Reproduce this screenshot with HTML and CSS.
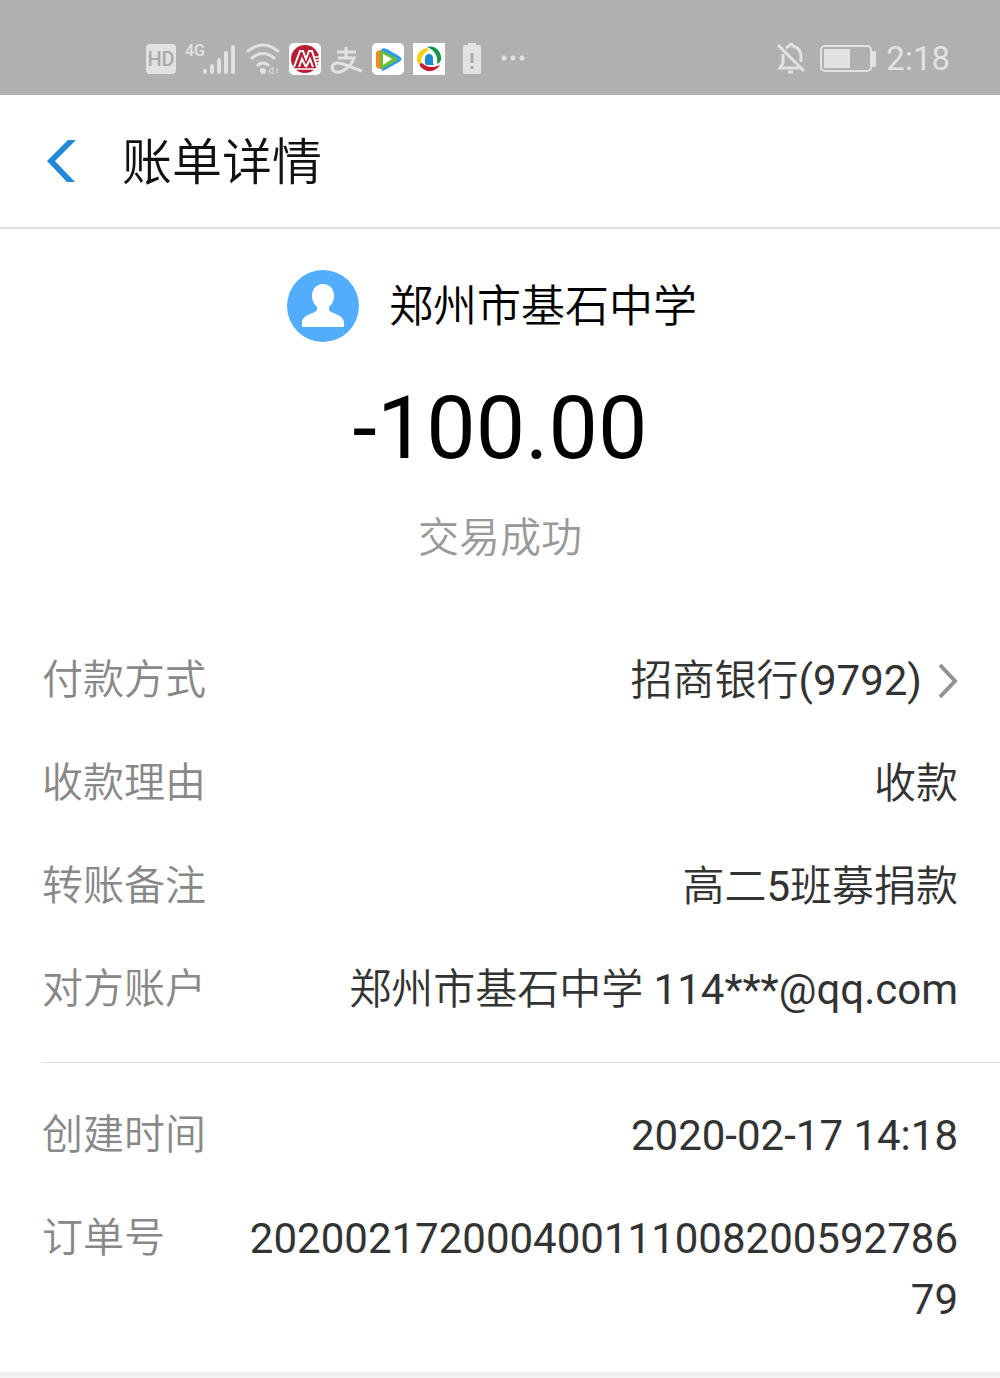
FILE: index.html
```html
<!DOCTYPE html>
<html lang="zh-CN">
<head>
<meta charset="utf-8" />
<meta name="viewport" content="width=device-width, initial-scale=1" />
<title>账单详情</title>
<link rel="stylesheet" href="styles.css">
</head>

<body>
<div class="status">
	<div class="icons">
		<svg width="30" height="36" viewBox="0 0 30 36">
			<rect x="0" y="3" width="30" height="30" rx="4" fill="#e2e2e2"/>
			<text x="15" y="25" class="hd">HD</text>
		</svg>
		<svg width="52" height="36" viewBox="0 0 52 36">
			<text x="0" y="15" class="net">4G</text>
			<path d="M20 30v1M27 25v6M34 19v12M41 12v19M48 6v25" stroke="#e2e2e2" stroke-width="4" stroke-linecap="round"/>
		</svg>
		<svg width="34" height="36" viewBox="0 0 34 36" fill="none" stroke="#e2e2e2" stroke-width="3" stroke-linecap="round">
			<path d="M2 10q15-12 30 0M6 17q11-9 22 0M12 24q5-4 10 0"/>
			<circle cx="17" cy="30" r="3" fill="#e2e2e2" stroke="none"/>
			<path d="M27 27v6l-4-3zM31 27v5" stroke-width="1"/>
		</svg>
		<!-- 招商银行 -->
		<svg width="32" height="36" viewBox="0 0 32 36">
			<rect y="2" width="32" height="32" rx="5" fill="#fff"/>
			<circle cx="16" cy="18" r="14" fill="#b91d35"/>
			<path d="M4 28h24M26 16h5M27 19h4M27 22h3" stroke="#fff" stroke-width="1.500"/>
			<path d="M5 26l6-16h3l3 8 3-8h3l5 16M10 26l3-8 4 8M17 26l4-8 3 8" fill="none" stroke="#fff" stroke-width="2"/>
		</svg>
		<!-- 支付宝 -->
		<svg width="33" height="36" viewBox="0 0 33 36" fill="none" stroke="#e2e2e2" stroke-width="3">
			<path d="M7 11h19M16 6v11M8 17h16C21 26 12 32 6 31c-6-1-5-9 2-9 6 0 14 5 24 8"/>
		</svg>
		<!-- 腾讯视频 -->
		<svg width="32" height="36" viewBox="0 0 32 36">
			<rect y="2" width="32" height="32" rx="5" fill="#fff"/>
			<path d="M4 12q0-3 6-3v19q-6 0-6-3z" fill="#f28a1f"/>
			<path d="M9 9q1-3 6-1l12 7q5 3 0 6l-14 8q-4 2-4-2z" fill="#2f9be6"/>
			<path d="M8 11q1-2 5 0l11 6q2 1 0 3l-12 7q-4 2-4-2z" fill="#6cbf35"/>
			<path d="M11 13l9 5-9 6z" fill="#fff"/>
		</svg>
		<svg width="32" height="36" viewBox="0 0 32 36">
			<rect y="2" width="32" height="32" fill="#fff"/>
			<path d="M14 6c8-2 15 4 14 13-1 2-2 3-4 4 1-7-1-13-10-17z" fill="#159447"/>
			<path d="M27 24c-5 8-15 8-20 1-1-2 0-3 2-3 5 5 11 5 18 2z" fill="#c9182b"/>
			<path d="M5 23C2 15 6 8 14 7l2 2c-5 2-8 7-8 13z" fill="#f3cf19"/>
			<path d="M12 22v-4q0-5 4-5t4 5v4l1 2h-8z" fill="#188bd0"/>
		</svg>
		<svg width="36" height="36" viewBox="0 0 36 36">
			<path d="M14 2h8v2h3q2 0 2 2v25q0 2-2 2H11q-2 0-2-2V6q0-2 2-2h3z" fill="#e2e2e2"/>
			<path d="M18 12v10M18 25v3" stroke="#aaa" stroke-width="3"/>
		</svg>
		<svg width="28" height="36" viewBox="0 0 28 36" fill="#e2e2e2">
			<circle cx="5" cy="17" r="2.500"/>
			<circle cx="14" cy="17" r="2.500"/>
			<circle cx="23" cy="17" r="2.500"/>
		</svg>
	</div>
	<div class="icons">
		<svg width="34" height="36" viewBox="0 0 34 36" fill="none" stroke="#e2e2e2" stroke-width="3">
			<path d="M2 4l26 26M10 7l3-2q2-4 4 0 8 2 8 11v5M7 13v9l-3 5h19M12 31h5"/>
		</svg>
		<svg width="58" height="36" viewBox="0 0 58 36">
			<rect x="2" y="5" width="50" height="25" rx="4" fill="none" stroke="#e2e2e2" stroke-width="2"/>
			<rect x="5" y="8" width="26" height="19" fill="#e2e2e2"/>
			<rect x="53" y="10" width="4" height="16" rx="1" fill="#e2e2e2"/>
		</svg>
		<span class="time">2:18</span>
	</div>
</div>

<div class="header">
	<a href="#" class="back" aria-label="返回">
		<svg width="32" height="46" viewBox="0 0 32 46"><path d="M22 2h8L9 23l20 21h-8L1 23z" fill="#2189d8"/></svg>
	</a>
	<h1>账单详情</h1>
</div>

<div class="bill">
	<div class="summary">
		<div class="payee">
			<svg width="72" height="72" viewBox="0 0 72 72">
				<circle cx="36" cy="36" r="36" fill="#52aefc"/>
				<path d="M36 14c7 0 11 5 11 12 0 5-2 8-5 11v3c2 4 15 4 15 13v4H15v-4c0-9 13-9 15-13v-3c-3-3-5-6-5-11 0-7 4-12 11-12z" fill="#fff"/>
			</svg>
			<span>郑州市基石中学</span>
		</div>
		<p class="amount">-100.00</p>
		<p class="state">交易成功</p>
	</div>
	<dl class="list">
		<div class="row">
			<dt>付款方式</dt>
			<dd><a href="#">招商银行(9792)<svg width="20" height="38" viewBox="0 0 20 38"><path d="M2 3l15 16L2 35" fill="none" stroke="#929292" stroke-width="4"/></svg></a></dd>
		</div>
		<div class="row">
			<dt>收款理由</dt>
			<dd>收款</dd>
		</div>
		<div class="row">
			<dt>转账备注</dt>
			<dd>高二5班募捐款</dd>
		</div>
		<div class="row">
			<dt>对方账户</dt>
			<dd>郑州市基石中学 114***@qq.com</dd>
		</div>
	</dl>
	<dl class="list order">
		<div class="row">
			<dt>创建时间</dt>
			<dd>2020-02-17 14:18</dd>
		</div>
		<div class="row">
			<dt>订单号</dt>
			<dd>20200217200040011100820059278679</dd>
		</div>
	</dl>
</div>
</body>
</html>
```
FILE: styles.css
```css
*{ margin:0; padding:0; box-sizing:border-box;}
body{ background:#f5f5f5; color:#333; font-family:Roboto,"Noto Sans CJK SC DemiLight","Noto Sans CJK SC",sans-serif;}
a{ color:inherit; text-decoration:none;}
svg{ display:block; flex:none;}

.status{ display:flex; justify-content:space-between; height:95px; padding:22px 50px 0 146px; background:#b0b0b0; align-items:center;}
.icons{ display:flex; align-items:center; gap:9px;}
.hd{ font-size:20px; font-weight:500; fill:#aaa; text-anchor:middle;}
.net{ font-size:16px; font-weight:500; fill:#e2e2e2;}
.time{ color:#e2e2e2; font-size:33px; line-height:36px;}

.header{ display:flex; align-items:center; height:134px; padding:0 46px; background:#fff; border-bottom:2px solid #e0e0e0;}
.header h1{ margin-left:44px; padding-top:4px; color:#111; font-size:50px; font-weight:350; line-height:60px;}

.bill{ background:#fff; border-bottom:4px solid #eee;}
.summary{ padding:40px 0 82px; color:#000; text-align:center;}
.payee{ display:flex; align-items:center; justify-content:center; gap:30px; padding-right:16px; font-size:44px; font-weight:350; line-height:72px;}
.payee span{ padding-top:2px;}
.amount{ margin-top:33px; font-size:88px; line-height:104px;}
.state{ margin-top:28px; color:#999; font-size:41px; font-weight:350; line-height:60px;}

.list{ display:flex; flex-direction:column; gap:42px; margin-left:42px; padding-right:42px;}
.row{ display:flex; justify-content:space-between; line-height:61px;}
.row dt{ flex:none; color:#888; font-size:41px; font-weight:350;}
.row dd{ max-width:78%; font-size:42px; text-align:right; word-break:break-all;}
.row a{ display:flex; align-items:center; gap:16px;}
.order{ margin-top:42px; padding-top:42px; padding-bottom:42px; border-top:1px solid #ddd;}
```
